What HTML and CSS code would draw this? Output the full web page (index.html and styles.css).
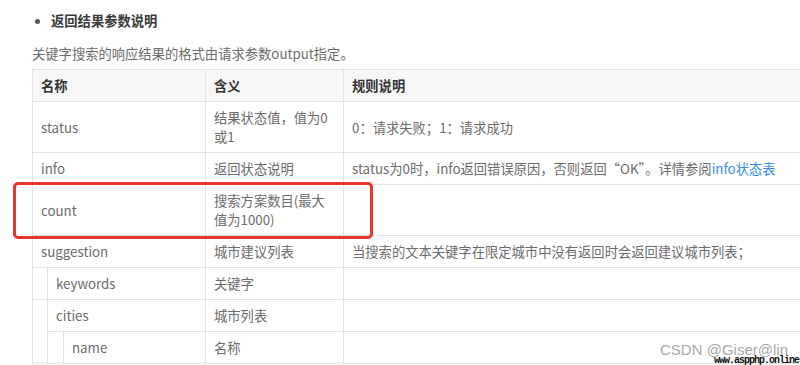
FILE: index.html
```html
<!DOCTYPE html>
<html lang="zh-CN">
<head>
<meta charset="utf-8">
<title>返回结果参数说明</title>
<link rel="stylesheet" href="styles.css">
</head>
<body>
<div class="page">
  <ul class="section-list">
    <li class="section-title">返回结果参数说明</li>
  </ul>
  <p class="desc">关键字搜索的响应结果的格式由请求参数output指定。</p>
  <table class="params">
    <colgroup>
      <col class="c-a"><col class="c-b"><col class="c-c"><col class="c-2"><col class="c-3">
    </colgroup>
    <thead>
      <tr><th colspan="3">名称</th><th>含义</th><th>规则说明</th></tr>
    </thead>
    <tbody>
      <tr><td colspan="3">status</td><td>结果状态值，值为0或1</td><td>0：请求失败；1：请求成功</td></tr>
      <tr><td colspan="3">info</td><td>返回状态说明</td><td>status为0时，info返回错误原因，否则返回“OK”。详情参阅<a class="link" href="#">info状态表</a></td></tr>
      <tr><td colspan="3">count</td><td>搜索方案数目(最大值为1000)</td><td></td></tr>
      <tr><td colspan="3">suggestion</td><td>城市建议列表</td><td>当搜索的文本关键字在限定城市中没有返回时会返回建议城市列表；</td></tr>
      <tr><td class="indent"></td><td colspan="2">keywords</td><td>关键字</td><td></td></tr>
      <tr><td class="indent" rowspan="2"></td><td colspan="2">cities</td><td>城市列表</td><td></td></tr>
      <tr><td class="indent"></td><td>name</td><td>名称</td><td></td></tr>
    </tbody>
  </table>
  <div class="highlight"></div>
  <div class="watermark">CSDN @Giser@lin</div>
  <div class="site-mark">www.aspphp.online</div>
</div>
</body>
</html>
```
FILE: styles.css
```css
html, body {
  margin: 0;
  padding: 0;
  background: #fff;
  overflow: hidden;
}
.page {
  position: relative;
  width: 800px;
  height: 365px;
  overflow: hidden;
  padding-left: 32px;
  box-sizing: border-box;
  font-family: "Noto Sans CJK SC", "Noto Sans", sans-serif;
  font-size: 13.3px;
  color: #6b6b6b;
}
.section-list {
  margin: 0;
  padding: 11px 0 0 19px;
  list-style: disc;
}
.section-title {
  line-height: 20px;
  font-weight: bold;
  color: #3a3a3a;
}
.section-title::marker {
  color: #555;
  font-size: 12px;
}
.desc {
  margin: 13px 0 0 0;
  line-height: 20px;
  color: #6b6b6b;
}
.params {
  margin-top: 5px;
  width: 790px;
  table-layout: fixed;
  border-collapse: collapse;
}
.c-a { width: 15px; }
.c-b { width: 16px; }
.c-c { width: 142px; }
.c-2 { width: 138px; }
.params th,
.params td {
  border: 1px solid #e2e2e2;
  padding: 6px 8px 6px 8px;
  line-height: 19px;
  text-align: left;
  vertical-align: middle;
  font-weight: normal;
}
.params th {
  background: #f7f7f7;
  font-weight: bold;
  color: #333;
}
.params td.indent {
  padding: 0;
}
.link {
  color: #3a8ee6;
  text-decoration: none;
}
.highlight {
  position: absolute;
  left: 13px;
  top: 182px;
  width: 360px;
  height: 57px;
  box-sizing: border-box;
  border: 3px solid #e8352e;
  border-radius: 5px;
}
.watermark {
  position: absolute;
  left: 660px;
  top: 342px;
  font-family: "Liberation Sans", Arial, sans-serif;
  font-size: 15px;
  line-height: 15px;
  color: #a8a8a8;
}
.site-mark {
  position: absolute;
  left: 714px;
  top: 357px;
  font-family: "Liberation Mono", monospace;
  font-size: 10px;
  letter-spacing: -1px;
  line-height: 8px;
  font-weight: bold;
  color: #111;
}
```
